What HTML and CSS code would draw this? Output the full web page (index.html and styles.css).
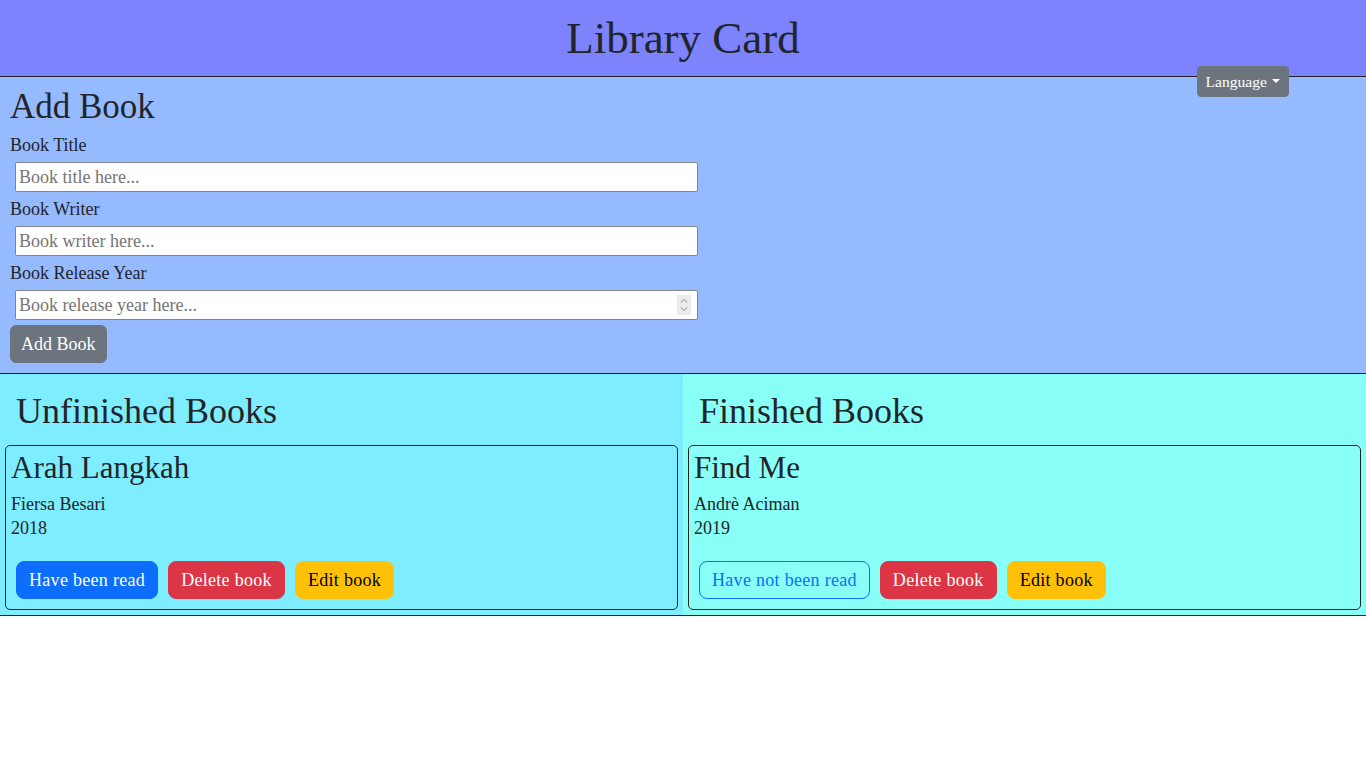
FILE: index.html
```html
<!DOCTYPE html>
<html lang="en">
<head>
<meta charset="utf-8">
<title>Library Card</title>
<link rel="stylesheet" href="styles.css">
</head>
<body>
<header class="topbar">
  <h1 class="title">Library Card</h1>
</header>
<div class="lang">
  <button class="btn-lang" type="button">Language<span class="caret"></span></button>
</div>
<section class="add">
  <h2 class="add-title">Add Book</h2>
  <form class="add-form">
    <label class="field-label" for="t">Book Title</label>
    <input class="field" id="t" type="text" placeholder="Book title here...">
    <label class="field-label" for="w">Book Writer</label>
    <input class="field" id="w" type="text" placeholder="Book writer here...">
    <label class="field-label" for="y">Book Release Year</label>
    <div class="num-wrap">
      <input class="field" id="y" type="text" placeholder="Book release year here...">
      <span class="spin"><svg width="14" height="20" viewBox="0 0 14 20"><path d="M4 7.5 L7 4.5 L10 7.5" fill="none" stroke="#8a8a8a" stroke-width="1"/><path d="M4 12.5 L7 15.5 L10 12.5" fill="none" stroke="#8a8a8a" stroke-width="1"/></svg></span>
    </div>
    <button class="btn btn-gray" type="button">Add Book</button>
  </form>
</section>
<section class="shelves">
  <div class="shelf shelf-unfinished">
    <h2 class="shelf-title">Unfinished Books</h2>
    <article class="book">
      <h3 class="book-title">Arah Langkah</h3>
      <p class="book-meta">Fiersa Besari</p>
      <p class="book-meta last">2018</p>
      <div class="actions">
        <button class="btn btn-blue" type="button">Have been read</button>
        <button class="btn btn-red" type="button">Delete book</button>
        <button class="btn btn-yellow" type="button">Edit book</button>
      </div>
    </article>
  </div>
  <div class="shelf shelf-finished">
    <h2 class="shelf-title">Finished Books</h2>
    <article class="book">
      <h3 class="book-title">Find Me</h3>
      <p class="book-meta">Andrè Aciman</p>
      <p class="book-meta last">2019</p>
      <div class="actions">
        <button class="btn btn-outline" type="button">Have not been read</button>
        <button class="btn btn-red" type="button">Delete book</button>
        <button class="btn btn-yellow" type="button">Edit book</button>
      </div>
    </article>
  </div>
</section>
</body>
</html>
```
FILE: styles.css
```css
* { box-sizing: border-box; }
html, body {
  margin: 0;
  padding: 0;
  background: #fff;
}
body {
  font-family: "Liberation Serif", "DejaVu Serif", serif;
  font-size: 18px;
  line-height: 24px;
  color: #212529;
  position: relative;
}
.topbar {
  background: #7c83fd;
  border-bottom: 1px solid #222;
  padding: 14px 0;
  text-align: center;
}
.title {
  margin: 0;
  font-weight: 400;
  font-size: 45px;
  line-height: 48px;
}
.lang {
  position: absolute;
  top: 66px;
  right: 77px;
}
.btn-lang {
  font-family: inherit;
  font-size: 15.6px;
  line-height: 21px;
  height: 31px;
  padding: 4px 8px;
  background: #6c757d;
  color: #fff;
  border: 1px solid #6c757d;
  border-radius: 4px;
  display: flex;
  align-items: center;
}
.caret {
  display: inline-block;
  margin-left: 5px;
  border-top: 4.5px solid #fff;
  border-left: 4px solid transparent;
  border-right: 4px solid transparent;
  margin-top: -2px;
}
.add {
  background: #96baff;
  border-bottom: 1px solid #222;
  padding: 11px 10px 10px;
}
.add-title {
  margin: 0 0 7px;
  font-weight: 400;
  font-size: 35px;
  line-height: 38px;
}
.add-form {
  display: flex;
  flex-direction: column;
  align-items: flex-start;
}
.field-label {
  display: block;
  line-height: 24px;
}
.field {
  display: block;
  width: 683px;
  height: 30px;
  margin: 5px 0 5px 5px;
  padding: 1px 3px;
  border: 1px solid #858585;
  border-radius: 2px;
  background: #fff;
  font-family: inherit;
  font-size: 18px;
  color: #212529;
}
.field::placeholder { color: #757575; }
.num-wrap {
  position: relative;
}
.spin {
  position: absolute;
  top: 10px;
  right: 7px;
  width: 14px;
  height: 20px;
  background: #ececec;
  display: flex;
}
.btn {
  font-family: inherit;
  font-size: 18px;
  line-height: 24px;
  letter-spacing: 0.3px;
  padding: 6px 12px;
  border: 1px solid transparent;
  border-radius: 8px;
  cursor: pointer;
}
.btn-gray {
  background: #6c757d;
  border-color: #6c757d;
  color: #fff;
  border-radius: 6px;
  letter-spacing: 0;
  padding: 6px 10px;
}
.shelves {
  display: flex;
  border-bottom: 1px solid #222;
}
.shelf {
  flex: 1 1 50%;
  padding: 5px;
}
.shelf-unfinished { background: #7dedff; }
.shelf-finished { background: #88fff7; }
.shelf-title {
  margin: 13px 0 15px;
  padding-left: 11px;
  font-weight: 400;
  font-size: 36px;
  line-height: 38px;
}
.book {
  border: 1px solid #222;
  border-radius: 5px;
  padding: 5px;
}
.book-title {
  margin: 0 0 7px;
  font-weight: 400;
  font-size: 31px;
  line-height: 34px;
}
.book-meta {
  margin: 0;
}
.book-meta.last {
  margin-bottom: 16px;
}
.actions {
  display: flex;
  gap: 10px;
  padding: 5px;
}
.btn-blue { background: #0d6efd; border-color: #0d6efd; color: #fff; }
.btn-red { background: #dc3545; border-color: #dc3545; color: #fff; }
.btn-yellow { background: #ffc107; border-color: #ffc107; color: #000; }
.btn-outline { background: transparent; border-color: #0d6efd; color: #0d6efd; }
```
